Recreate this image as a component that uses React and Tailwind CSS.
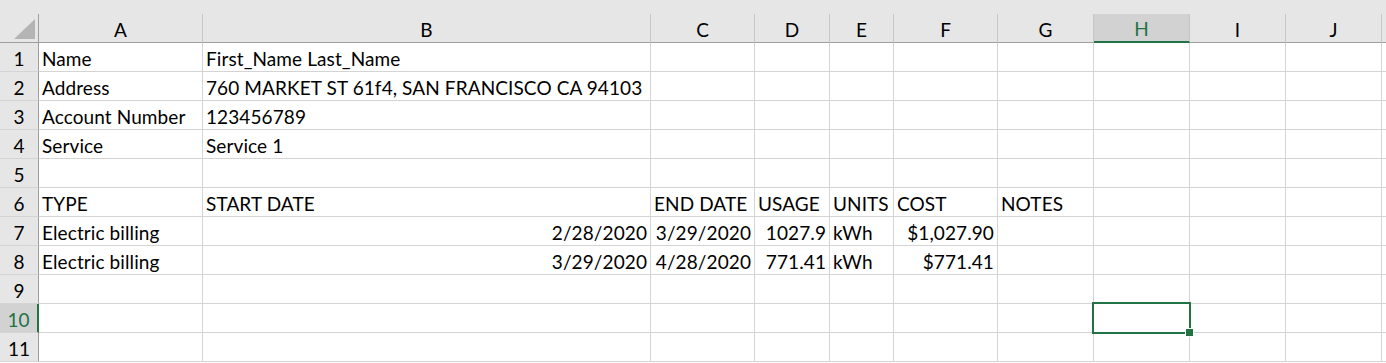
const cols = ["A", "B", "C", "D", "E", "F", "G", "H", "I", "J"];

// [text, align] per column A..J
const rows = [
  [["Name"], ["First_Name Last_Name"]],
  [["Address"], ["760 MARKET ST 61f4, SAN FRANCISCO CA 94103"]],
  [["Account Number"], ["123456789"]],
  [["Service"], ["Service 1"]],
  [],
  [["TYPE"], ["START DATE"], ["END DATE"], ["USAGE"], ["UNITS"], ["COST"], ["NOTES"]],
  [["Electric billing"], ["2/28/2020", "r"], ["3/29/2020", "r"], ["1027.9", "r"], ["kWh"], ["$1,027.90", "r"]],
  [["Electric billing"], ["3/29/2020", "r"], ["4/28/2020", "r"], ["771.41", "r"], ["kWh"], ["$771.41", "r"]],
  [],
  [],
  [],
];

const SEL_COL = 7;
const SEL_ROW = 9;

function Cell({ cell, selected }) {
  const text = cell ? cell[0] : "";
  const right = cell && cell[1] === "r";
  return (
    <div
      className={
        "relative h-[29px] border-r border-b border-[#d4d4d4] bg-white flex items-center px-[3px] pt-[2px] whitespace-nowrap tracking-[0.1px] " +
        (right ? "justify-end" : "justify-start")
      }
    >
      {text}
      {selected && (
        <div className="absolute -left-[2px] -top-[2px] w-[99px] h-[32px] border-2 border-[#217346] z-10">
          <div className="absolute -right-[5px] -bottom-[5px] w-[7px] h-[7px] bg-[#217346] border border-white box-content" />
        </div>
      )}
    </div>
  );
}

export default function App() {
  return (
    <div
      className="w-[1386px] h-[363px] overflow-hidden bg-white text-[19px] leading-none text-black"
      style={{ fontFamily: "Lato, 'Liberation Sans', sans-serif" }}
    >
      <div className="h-[14px] bg-[#e6e6e6]" />
      <div className="grid grid-cols-[39px_164px_448px_104px_75px_64px_104px_96px_96px_96px_96px_1fr]">
        {/* corner */}
        <div className="h-[29px] bg-[#e6e6e6] border-r border-b border-[#9e9e9e] flex items-end justify-end pr-[3px] pb-[3px]">
          <svg width="21" height="20" viewBox="0 0 21 20">
            <polygon points="21,0 21,20 0,20" fill="#b4b4b4" />
          </svg>
        </div>
        {cols.map((c, i) => (
          <div
            key={c}
            className={
              "h-[29px] flex items-center justify-center pt-[2px] border-r " +
              (i === SEL_COL
                ? "bg-[#d2d2d2] text-[#217346] border-b-2 border-b-[#217346] border-r-[#c6c6c6]"
                : "bg-[#e6e6e6] border-b border-b-[#9e9e9e] border-r-[#c6c6c6]")
            }
          >
            {c}
          </div>
        ))}
        <div className="h-[29px] bg-[#e6e6e6] border-b border-[#9e9e9e]" />

        {rows.map((r, ri) => (
          <div key={ri} className="contents">
            <div
              className={
                "h-[29px] flex items-center justify-center pt-[2px] border-b border-b-[#d4d4d4] " +
                (ri === SEL_ROW
                  ? "bg-[#d2d2d2] text-[#217346] border-r-2 border-r-[#217346]"
                  : "bg-[#e6e6e6] border-r border-r-[#9e9e9e]")
              }
            >
              {ri + 1}
            </div>
            {cols.map((c, ci) => (
              <Cell key={c} cell={r[ci]} selected={ri === SEL_ROW && ci === SEL_COL} />
            ))}
            <div className="h-[29px] border-b border-[#d4d4d4] bg-white" />
          </div>
        ))}
      </div>
    </div>
  );
}
